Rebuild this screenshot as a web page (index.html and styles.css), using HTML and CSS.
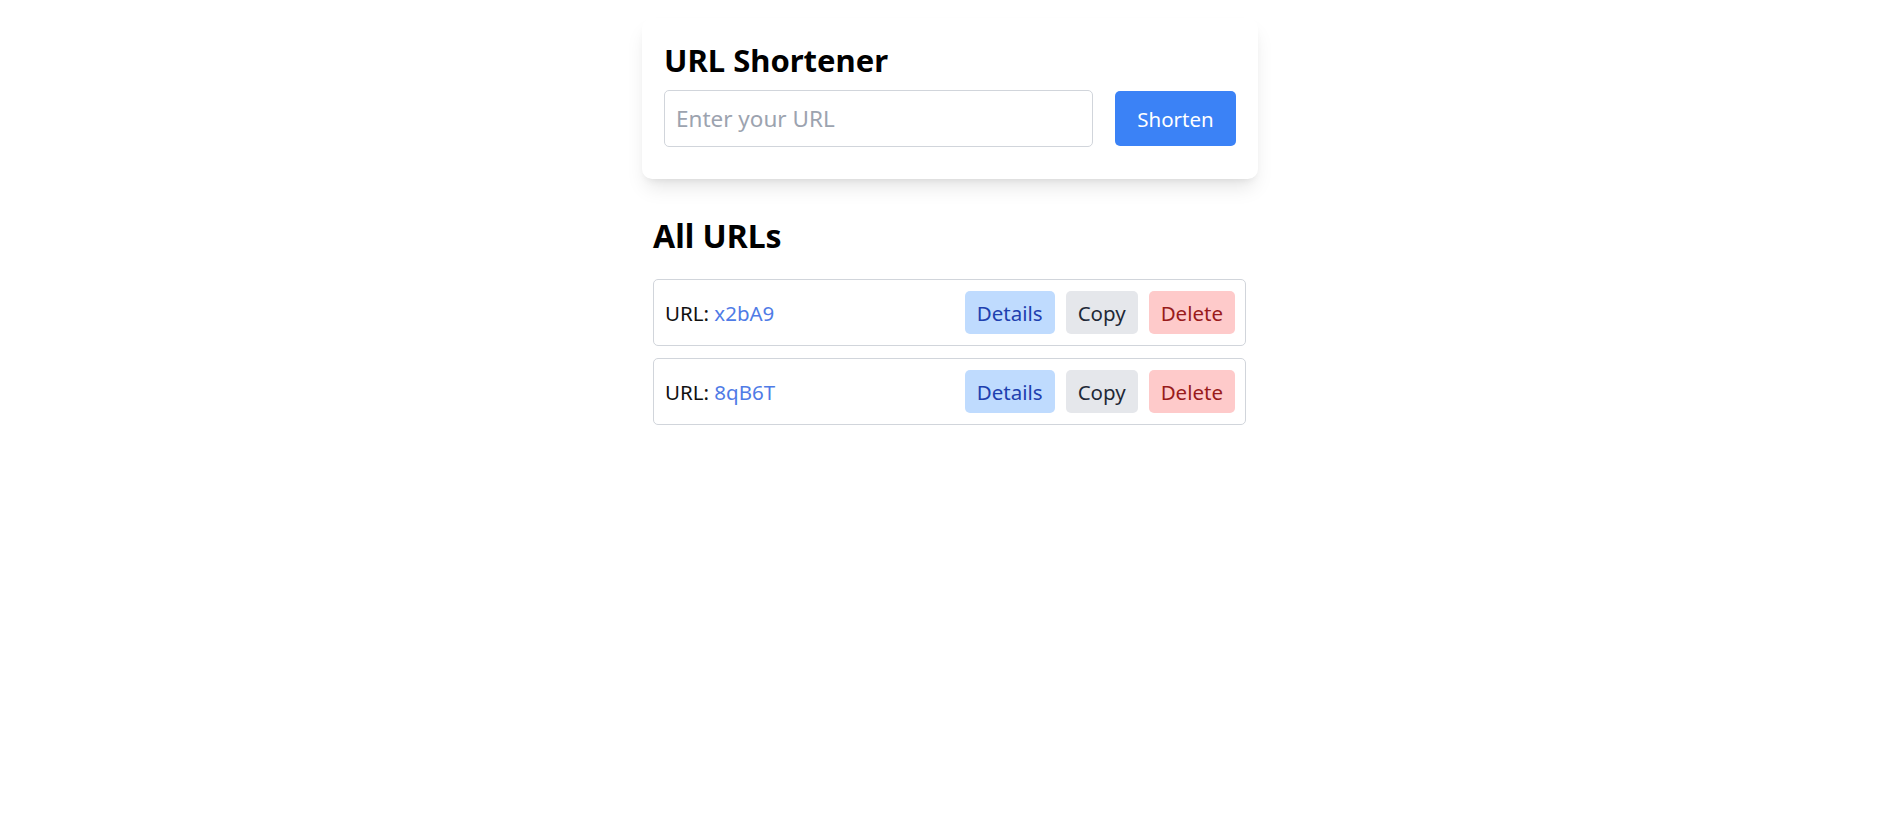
FILE: index.html
```html
<!DOCTYPE html>
<html lang="en">
<head>
<meta charset="utf-8">
<title>URL Shortener</title>
<link rel="stylesheet" href="styles.css">
</head>
<body>
<main class="page">
  <section class="card">
    <h1 class="title">URL Shortener</h1>
    <form class="form">
      <input class="input" type="text" placeholder="Enter your URL">
      <button class="btn-primary" type="button">Shorten</button>
    </form>
  </section>
  <section class="list-section">
    <h2 class="list-title">All URLs</h2>
    <ul class="list">
      <li class="row">
        <span class="row-text">URL: <a class="link" href="#">x2bA9</a></span>
        <div class="actions">
          <button class="btn btn-details" type="button">Details</button>
          <button class="btn btn-copy" type="button">Copy</button>
          <button class="btn btn-delete" type="button">Delete</button>
        </div>
      </li>
      <li class="row">
        <span class="row-text">URL: <a class="link" href="#">8qB6T</a></span>
        <div class="actions">
          <button class="btn btn-details" type="button">Details</button>
          <button class="btn btn-copy" type="button">Copy</button>
          <button class="btn btn-delete" type="button">Delete</button>
        </div>
      </li>
    </ul>
  </section>
</main>
</body>
</html>
```
FILE: styles.css
```css
* { box-sizing: border-box; }
html, body { margin: 0; padding: 0; background: #ffffff; }
body {
  font-family: "Noto Sans", "Open Sans", sans-serif;
  color: #111111;
}
.page {
  width: 616px;
  margin: 18px auto 0;
}
.card {
  background: #ffffff;
  border-radius: 10px;
  padding: 22px 22px 32px;
  box-shadow: 0 12px 20px -4px rgba(0,0,0,0.10), 0 5px 8px -5px rgba(0,0,0,0.10);
}
.title {
  margin: 0 0 10px;
  font-size: 31px;
  line-height: 40px;
  font-weight: 700;
  color: #000000;
}
.form {
  display: flex;
  gap: 22px;
  margin: 0;
}
.input {
  flex: 1;
  height: 57px;
  border: 1px solid #d1d5db;
  border-radius: 5px;
  padding: 0 11px;
  font-family: inherit;
  font-size: 22.5px;
  color: #111;
  outline: none;
}
.input::placeholder { color: #9ca3af; }
.btn-primary {
  width: 121px;
  height: 55px;
  margin-top: 1px;
  border: none;
  border-radius: 5px;
  background: #3b82f6;
  color: #ffffff;
  font-family: inherit;
  font-size: 20.5px;
}
.list-section {
  margin: 37px 12px 0 11px;
}
.list-title {
  margin: 0 0 23px;
  font-size: 32px;
  line-height: 40px;
  font-weight: 700;
  color: #000000;
}
.list {
  list-style: none;
  margin: 0;
  padding: 0;
  display: flex;
  flex-direction: column;
  gap: 12px;
}
.row {
  height: 67px;
  border: 1px solid #d1d5db;
  border-radius: 5px;
  padding: 0 10px 0 11px;
  display: flex;
  align-items: center;
  justify-content: space-between;
}
.row-text {
  font-size: 20.5px;
  line-height: 30px;
  color: #111111;
}
.link {
  color: #4f7be6;
  text-decoration: none;
}
.actions {
  display: flex;
  gap: 11px;
}
.btn {
  height: 43px;
  padding: 0 12px;
  border: none;
  border-radius: 5px;
  font-family: inherit;
  font-size: 20.5px;
}
.btn-details { background: #bfdbfe; color: #1e40af; }
.btn-copy { background: #e5e7eb; color: #1f2937; }
.btn-delete { background: #fecaca; color: #991b1b; }
```
